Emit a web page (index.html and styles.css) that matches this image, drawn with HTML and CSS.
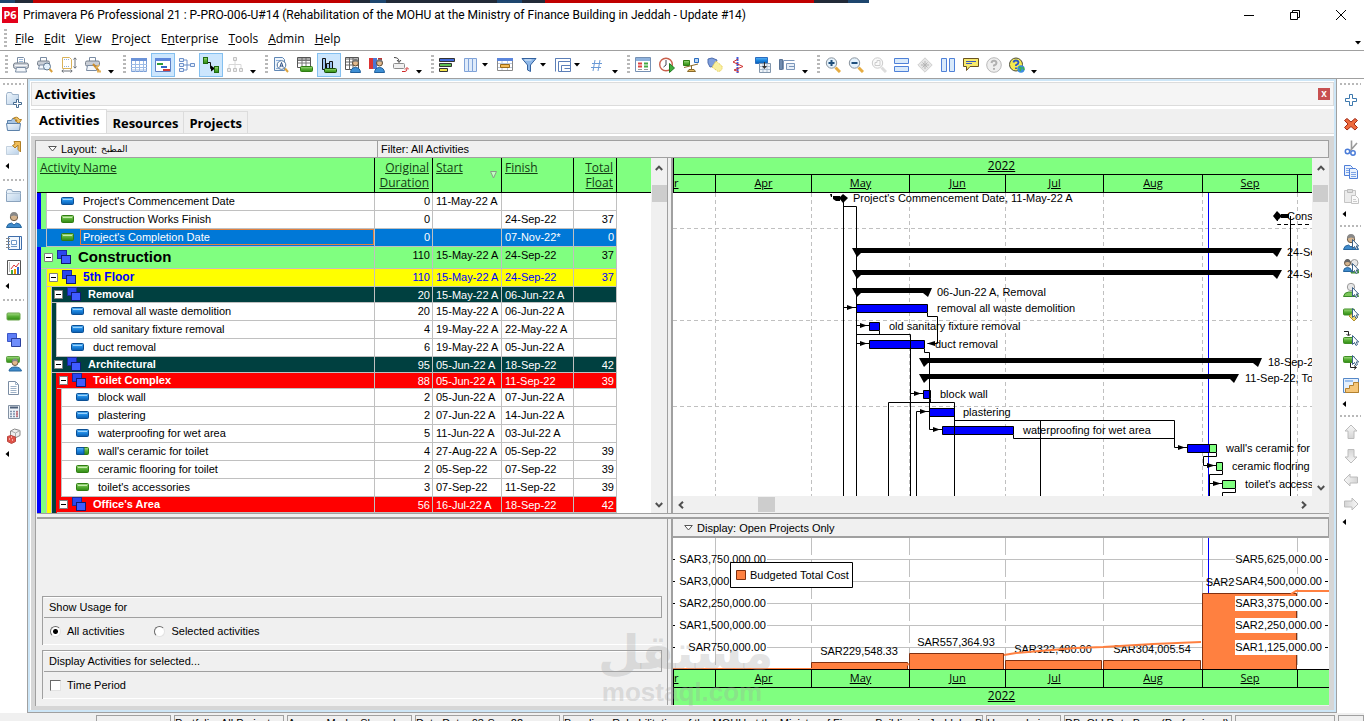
FILE: index.html
```html
<!DOCTYPE html>
<html lang="en">
<head>
    <meta charset="UTF-8">
    <meta name="viewport" content="width=device-width, initial-scale=1.0">
    <title>Primavera P6 Professional 21</title>
    <link rel="stylesheet" href="styles.css">
</head>
<body>
    <!-- Icon sprite -->
    <svg class="sprite" aria-hidden="true">
        <defs>
            <linearGradient id="gBlue" x1="0" y1="0" x2="0" y2="1"><stop offset="0" stop-color="#5db4f5"/><stop offset=".5" stop-color="#1b86e0"/><stop offset="1" stop-color="#0a5cae"/></linearGradient>
            <linearGradient id="gGreen" x1="0" y1="0" x2="0" y2="1"><stop offset="0" stop-color="#a5dc84"/><stop offset=".5" stop-color="#57ae35"/><stop offset="1" stop-color="#2f8a12"/></linearGradient>
            <linearGradient id="gPale" x1="0" y1="0" x2="1" y2="1"><stop offset="0" stop-color="#f2f8fd"/><stop offset="1" stop-color="#b8d0e8"/></linearGradient>
            <linearGradient id="gGrey" x1="0" y1="0" x2="0" y2="1"><stop offset="0" stop-color="#f8f8f8"/><stop offset="1" stop-color="#d4d4d4"/></linearGradient>
        </defs>
        <symbol id="act-blue" viewBox="0 0 13 8"><rect x=".5" y=".5" width="12" height="7" rx="1" fill="url(#gBlue)" stroke="#0b4f94"/><path d="M2 2.5h9" stroke="#9bd2fb"/></symbol>
        <symbol id="act-green" viewBox="0 0 13 8"><rect x=".5" y=".5" width="12" height="7" rx="1" fill="url(#gGreen)" stroke="#2f7d12"/><path d="M2 2.5h9" stroke="#c4ecab"/></symbol>
        <symbol id="act-mix" viewBox="0 0 13 8"><rect x=".5" y=".5" width="12" height="7" rx="1" fill="url(#gGreen)" stroke="#2f7d12"/><path d="M1 .5h7v7H1q-.5 0-.5-.5V1q0-.5.5-.5z" fill="url(#gBlue)" stroke="#0b4f94"/></symbol>
        <symbol id="wbs" viewBox="0 0 14 14"><rect x=".5" y=".5" width="9" height="8" fill="#2b46ee" stroke="#1a2a9c"/><rect x="4.500" y="5.500" width="9" height="8" fill="#3f5cff" stroke="#101a70"/></symbol>
        <symbol id="minus" viewBox="0 0 9 9"><path fill="#fff" stroke="#808080" d="M.5.5h8v8h-8z"/><path d="M2 4.500h5" stroke="#000"/></symbol>
        <symbol id="caret" viewBox="0 0 6 4"><path d="M0 0h6L3 3.500z"/></symbol>
        <symbol id="caret-left" viewBox="0 0 4 6"><path d="M4 0v6L.5 3z"/></symbol>
        <symbol id="tri" viewBox="0 0 9 6"><path d="M.7.500h7.600L4.500 5z" fill="#fff" stroke="#555"/></symbol>
        <symbol id="chev" viewBox="0 0 8 6"><path d="M.8 5L4 1.600 7.200 5" fill="none" stroke="#505050" stroke-width="2"/></symbol>

        <symbol id="print" viewBox="0 0 16 16"><path d="M4.500 6V.500h6l1 1V6" fill="#fff" stroke="#7a8ca3"/><path d="M6 2.500h4M6 4.500h4" stroke="#9db9da"/><rect x=".5" y="6" width="15" height="5.500" rx="2" fill="#c9ced6" stroke="#77808c"/><path d="M2 8.500h12" stroke="#f3f5f8"/><path d="M3.500 10.500h9l1 4.500h-11z" fill="#f4f7fb" stroke="#7a8ca3"/></symbol>
        <symbol id="preview" viewBox="0 0 16 16"><path d="M3.500 4V.500h6V4" fill="#fff" stroke="#7a8ca3"/><rect x=".5" y="4" width="12" height="4.500" rx="1.500" fill="#c9ced6" stroke="#77808c"/><path d="M2.500 8h8v4h-9z" fill="#f4f7fb" stroke="#7a8ca3"/><circle cx="10" cy="9.500" r="3.500" fill="#e4f1fc" stroke="#5f7790"/><path d="M12.500 12l2.700 3" stroke="#d9a03c" stroke-width="2"/></symbol>
        <symbol id="pagesetup" viewBox="0 0 16 16"><path d="M1.500.500h7l2 2v9h-9z" fill="#fff" stroke="#d9b25a"/><path d="M3 2.500h5M3 9.500h6" stroke="#8fb0dc" stroke-dasharray="1 1"/><path d="M14 1v10M12.500 2.500L14 .800l1.500 1.700M12.500 9.500L14 11.200l1.500-1.700M1 14h10M2.500 12.600L.8 14l1.700 1.500M9.500 12.600l1.700 1.400-1.700 1.500" fill="none" stroke="#6b7178"/></symbol>
        <symbol id="printset" viewBox="0 0 16 16"><path d="M4.500 4V.500h6V4" fill="#fff" stroke="#7a8ca3"/><rect x=".5" y="4" width="14" height="5" rx="1.500" fill="#c9ced6" stroke="#77808c"/><path d="M2.500 8.500h9v5h-10z" fill="#f4f7fb" stroke="#7a8ca3"/><path d="M8 7l6 7" stroke="#c98a2a" stroke-width="2"/><path d="M14 8l-3 3M12 14.500h4" stroke="#e2b25c" stroke-width="2"/></symbol>

        <symbol id="tablei" viewBox="0 0 16 16"><path fill="#fff" stroke="#7a9fd6" d="M.5 1.500h15v13H.5z"/><path fill="#6c93d8" d="M0 1h16v3H0z"/><path d="M0 7.500h16M0 10.500h16M0 13h16M4.500 4v11M8.500 4v11M12.500 4v11" stroke="#9dbbe6"/></symbol>
        <symbol id="gantt" viewBox="0 0 16 16"><path fill="#fff" stroke="#5c7fc4" d="M.5 1.500h15v13H.5z"/><path fill="#5c86dc" d="M0 1h16v3H0z"/><path fill="#2e9c3a" d="M2 6h6v2H2z"/><path fill="#2f66c8" d="M6 9h6v2H6z"/><path fill="#cf3a36" d="M8 12h7v2H8z"/></symbol>
        <symbol id="network" viewBox="0 0 16 16"><path fill="#e9f1fc" stroke="#6d90c8" d="M.5 1.500h4v3h-4zM.5 6.500h4v3h-4zM.5 11.500h4v3h-4zM11.500 6.500h4v3h-4z"/><path d="M5 3h3v10H5M5 8h6" fill="none" stroke="#6d90c8"/></symbol>
        <symbol id="trace" viewBox="0 0 16 16"><rect x=".5" y=".5" width="4" height="6" fill="url(#gGreen)" stroke="#1f6b10"/><path d="M5 5.500h2.500v6H9" fill="none" stroke="#111"/><path d="M8 8.500l4 3-4 3z"/><rect x="11.500" y="9.500" width="4" height="6" fill="url(#gGreen)" stroke="#1f6b10"/></symbol>
        <symbol id="orgchart" viewBox="0 0 16 16"><path fill="#eee" stroke="#c2c2c2" d="M6.500.500h3v3h-3zM.5 11.500h3v3h-3zM6.500 11.500h3v3h-3zM12.500 11.500h3v3h-3z"/><path d="M8 4v7M2 11V7.500h12V11" fill="none" stroke="#d8d8d8"/></symbol>

        <symbol id="findtext" viewBox="0 0 16 16"><path d="M1.500.500h8l2 2v11h-10z" fill="#eef5fc" stroke="#5f87b5"/><path d="M3 3.500h5M3 11.500h4" stroke="#8fb0dc"/><circle cx="8.500" cy="8" r="4.300" fill="#fff" stroke="#50759e"/><path d="M6.700 10.500L8.500 5.500l1.800 5M7.300 9h2.400" stroke="#2b4f84" fill="none"/><path d="M12 11.500l3 3.500" stroke="#dda43e" stroke-width="2"/></symbol>
        <symbol id="tablegreen" viewBox="0 0 16 16"><path fill="#fff" stroke="#555" d="M.5.500h13v10H.5z"/><path d="M1 3.500h12M1 6h12M5 1v9M9 1v9" stroke="#777"/><path d="M1 2h12" stroke="#555"/><rect x="3.500" y="9.500" width="12" height="5" rx="1" fill="url(#gGreen)" stroke="#2f7d12"/></symbol>
        <symbol id="chartgreen" viewBox="0 0 16 16"><path fill="#9cc2ef" stroke="#111" d="M1.500 1.500h3v11h-3zM5.500 6.500h3v6h-3zM8.500 4.500h3v8h-3z"/><rect x="3.500" y="11.500" width="12" height="4" rx="1" fill="url(#gGreen)" stroke="#174f08"/></symbol>
        <symbol id="tableuser" viewBox="0 0 16 16"><path fill="#fff" stroke="#555" d="M.5.500h13v12H.5z"/><path d="M1 2h12M1 5h12M1 8h12M4.500 1v12M8 1v12" stroke="#666"/><circle cx="10.500" cy="6" r="3" fill="#e3b98c" stroke="#5a4630"/><path d="M7.500 5.500q0-3.500 3-3.500t3 3.500q-3-2-6 0z" fill="#777"/><path d="M5.500 15.500q.5-5 5-5t5 5z" fill="#3e8fd4" stroke="#1f5f9c"/></symbol>
        <symbol id="chartuser" viewBox="0 0 16 16"><path fill="#d33" d="M0 1h4v11H0z"/><path fill="#4c76d4" d="M4 1h4v11H4z"/><path fill="#b33" d="M9 1h4v6H9z"/><circle cx="10.500" cy="6" r="3" fill="#e3b98c" stroke="#5a4630"/><path d="M7.500 5.500q0-3.500 3-3.500t3 3.500q-3-2-6 0z" fill="#777"/><path d="M5.500 15.500q.5-5 5-5t5 5z" fill="#3e8fd4" stroke="#1f5f9c"/></symbol>
        <symbol id="assignto" viewBox="0 0 16 16"><path d="M1 .500q5 0 5 4M4 3l2 2.500L8 3" fill="none" stroke="#444"/><rect x=".5" y="6.500" width="11" height="5" rx="1" fill="#f0f0f0" stroke="#8c8c8c"/><path d="M9 14.500h3q2 0 2-3M12 12.500l2-2 2 2" fill="none" stroke="#d02a2a"/></symbol>

        <symbol id="bars" viewBox="0 0 16 16"><path fill="#4169d8" stroke="#333" d="M.5 1.500h15v3H.5z"/><path fill="#5fbf52" stroke="#333" d="M.5 6.500h12v3H.5z"/><path fill="#f2e24a" stroke="#333" d="M.5 11.500h8v3h-8z"/></symbol>
        <symbol id="columns" viewBox="0 0 16 16"><path fill="#dfebfa" stroke="#7fa2d8" d="M1.500 1.500h4v13h-4zM5.500 1.500h4v13h-4zM9.500 1.500h4v13h-4z"/></symbol>
        <symbol id="timescale" viewBox="0 0 16 16"><path fill="#fff" stroke="#888" d="M.5 1.500h15v12H.5z"/><path fill="#5c86dc" d="M0 1h16v3H0z"/><path d="M1 6.500h14M1 10.500h14M5 4v9M10.500 4v9" stroke="#b9c6da"/><path fill="#f4bb55" stroke="#9a6a18" d="M3.500 7.500h9v3h-9z"/></symbol>
        <symbol id="filter" viewBox="0 0 16 16"><path d="M1 1.500h14L9.500 8v6.500L6.500 13V8z" fill="#8db7e8" stroke="#33619e"/><path d="M3.500 3h7" stroke="#e4f1fd"/></symbol>
        <symbol id="group" viewBox="0 0 16 16"><path fill="#fff" stroke="#5c7fb8" d="M.5 1.500h15M.5 1.500v13M3.500 4.500h12v10h-12zM6.500 8.500h9M6.500 8.500v6M9.500 11.500h6"/><path d="M.5 1.500h15v3" fill="none" stroke="#5c7fb8"/></symbol>
        <symbol id="hash" viewBox="0 0 16 16"><path d="M6 3L4 14M11 3L9 14M3 6.500h10M2 10.500h10" stroke="#6a9ad6" fill="none"/></symbol>

        <symbol id="spreadsheet" viewBox="0 0 16 16"><path fill="#fff" stroke="#7590b4" d="M.5.500h15v14H.5z"/><path fill="#8fb2dd" d="M1 1h14v3H1z"/><path d="M3 6.500h4M3 9.500h4" stroke="#d44" stroke-width="2"/><path d="M9 6.500h4M9 9.500h4" stroke="#4a4" stroke-width="2"/><path d="M3 12.500h4M9 12.500h4" stroke="#999"/></symbol>
        <symbol id="schedule" viewBox="0 0 16 16"><circle cx="7" cy="7.500" r="6.300" fill="#fff" stroke="#c9604c" stroke-width="1.400"/><path d="M7 3v5l-2.500 2" fill="none" stroke="#445"/><path d="M10.500 6.500v9l5-4.500z" fill="#3fae3f" stroke="#1f7a1f"/></symbol>
        <symbol id="level" viewBox="0 0 16 16"><path fill="url(#gGreen)" stroke="#2f7d12" d="M.5 3.500h6v5h-6z"/><path fill="#bcd8f5" stroke="#2a6cc0" d="M11.500 1.500h4v4h-4z"/><path d="M1 10.500L15 7M8.500 8.500v5" stroke="#8a6a2a"/><path d="M4.500 14.500L6 12.500h5l1.500 2z" fill="#e5b95e" stroke="#8a6a2a"/></symbol>
        <symbol id="spotlight" viewBox="0 0 16 16"><path d="M1 2l4-1 5 2-2 6-5 1-2-4z" fill="#7f9fdc" stroke="#4c6cae"/><path d="M9 4l6 5q1 5-4 5.500L5 10z" fill="#f9f0a0" stroke="#e2c33c" stroke-dasharray="1 1"/></symbol>
        <symbol id="progress" viewBox="0 0 16 16"><path d="M6.500 0v16" stroke="#3f5de0" stroke-width="2" stroke-dasharray="4 1"/><path d="M7 2L2 5l10 4.500L3 13l5 2" fill="none" stroke="#d03030"/></symbol>
        <symbol id="storeperiod" viewBox="0 0 16 16"><path fill="url(#gBlue)" stroke="#2a6cc0" d="M.5.500h12v6H.5z"/><path fill="#eef3f8" stroke="#8296ac" d="M4.500 6.500h11v9h-11z"/><path d="M5 9.500h10M5 12.500h10M8 7v8M12 7v8" stroke="#a9bccf"/><path d="M9 5v4H7l2.500 3L12 9h-2V5z" fill="#333"/></symbol>
        <symbol id="attach" viewBox="0 0 16 16"><path d="M.5 2.500h3v10h-3z" fill="#708cb0" stroke="#5a7496"/><path d="M4.500 3.500h11M4.500 3.500v9M7.500 6.500h8v6h-8zM10 9.500h5" fill="#e8eff8" stroke="#7c97ba"/></symbol>

        <symbol id="zoomin" viewBox="0 0 16 16"><path d="M10.500 10.500l4.500 4.500" stroke="#e6ac42" stroke-width="3"/><circle cx="6.500" cy="6" r="5.200" fill="#e5f2fc" stroke="#8a949e"/><path d="M3.500 6h6M6.500 3v6" stroke="#1f4f7c" stroke-width="2"/></symbol>
        <symbol id="zoomout" viewBox="0 0 16 16"><path d="M10.500 10.500l4.500 4.500" stroke="#e6ac42" stroke-width="3"/><circle cx="6.500" cy="6" r="5.200" fill="#e5f2fc" stroke="#8a949e"/><path d="M3.500 6h6" stroke="#1f4f7c" stroke-width="2"/></symbol>
        <symbol id="zoomfit" viewBox="0 0 16 16"><path d="M10.500 10.500l4.500 4.500" stroke="#ddd" stroke-width="3"/><circle cx="6.500" cy="6" r="5.200" fill="#fafafa" stroke="#ccc"/><path d="M4 8.500v-3h2v-2h3v5z" fill="none" stroke="#ccc"/></symbol>
        <symbol id="splith" viewBox="0 0 16 16"><path fill="#d9eafb" stroke="#4f81d8" d="M.5 1.500h14v5H.5zM.5 9.500h14v5H.5z"/></symbol>
        <symbol id="diamond" viewBox="0 0 16 16"><path d="M8 .800L15.200 8 8 15.200.8 8z" fill="#e6e6e6" stroke="#cfcfcf"/><path d="M8 4v8M4 8h8M5.500 5.500l5 5M10.500 5.500l-5 5" stroke="#b4b4b4"/></symbol>
        <symbol id="splitv" viewBox="0 0 16 16"><path fill="#d9eafb" stroke="#4f81d8" d="M1.500 1.500h5v13h-5zM9.500 1.500h5v13h-5z"/></symbol>
        <symbol id="comment" viewBox="0 0 16 16"><path d="M.5 1.500h15v8H7L3.500 13.500v-4h-3z" fill="#f7ea6c" stroke="#6b5320"/><path d="M3 4.500h10M3 6.500h6" stroke="#3558c4"/></symbol>
        <symbol id="helpgrey" viewBox="0 0 16 16"><circle cx="8" cy="8" r="7.300" fill="#eee" stroke="#b9b9b9"/><path d="M5.500 6q.3-2.300 2.500-2.300T10.500 6Q10.500 7.500 8 8.500v1M8 11v1.800" fill="none" stroke="#b0b0b0" stroke-width="2"/></symbol>
        <symbol id="helpweb" viewBox="0 0 16 16"><circle cx="7" cy="7.500" r="6.500" fill="#f5e94e" stroke="#4a4a3a"/><path d="M4.500 5.500q.3-2 2.500-2t2.500 2Q9.500 7 7 8v1M7 10.500V12" fill="none" stroke="#2b57c8" stroke-width="1.800"/><circle cx="12" cy="12" r="3.700" fill="#3a8de0"/><path d="M10 10l2 1-1 3M14 10l1 3" stroke="#3cb54a" stroke-width="1.600" fill="none"/></symbol>

        <symbol id="folder" viewBox="0 0 16 16"><path d="M.5 3.500l1-2h4l1 2h8v10H.5z" fill="url(#gPale)" stroke="#8ba3bd"/><path d="M.5 5.500h14" stroke="#b9cbdd"/></symbol>
        <symbol id="folderadd" viewBox="0 0 16 16"><path d="M.5 2.500l1-2h4l1 2h6v10H.5z" fill="url(#gPale)" stroke="#9db2c9"/><path d="M10.500 7.500h2v3h3v2h-3v3h-2v-3h-3v-2h3z" fill="#fff" stroke="#456b91"/></symbol>
        <symbol id="folderopen" viewBox="0 0 16 16"><path d="M1.500 4.500h4l1-2h5v5h-10z" fill="#a9c6e4" stroke="#5d82aa"/><path d="M7 2.500q4-3 6.500 1h2l-2.500 4L9 4.500h2q-1-2-4-2z" fill="#f3c566" stroke="#b07f25"/><path d="M.5 7.500h14l-1 7h-12z" fill="url(#gPale)" stroke="#5d82aa"/></symbol>
        <symbol id="folderout" viewBox="0 0 16 16"><path d="M.5 6.500h12v8H.5z" fill="url(#gPale)" stroke="#c3d1df"/><path d="M8 1.500h6.500V12L12 9.500V5L9 8 6.500 5.500 9 4z" fill="#f0bd58" stroke="#b07f25"/></symbol>
        <symbol id="user" viewBox="0 0 16 16"><circle cx="8" cy="5" r="3.700" fill="#d5b48e" stroke="#6b5a45"/><path d="M4 5q0-5 4-5t4 5q-4-3-8 0z" fill="#888"/><path d="M.5 15.500q.5-4 5-4.500l2.500 2 2.500-2q4.500.500 5 4.500z" fill="#3f8bcc" stroke="#25649c"/></symbol>
        <symbol id="notebook" viewBox="0 0 16 16"><path d="M2.500.500h13v13h-13z" fill="#f2f7fd" stroke="#3f6eab"/><path d="M13.500 1v12" stroke="#3f6eab"/><path d="M5.500 4.500h5v4h-5z" fill="#fff" stroke="#6d97c8"/><path d="M0 2.500h4M0 5.500h4M0 8.500h4M0 11.500h4" stroke="#888"/><path d="M5 10.500h6" stroke="#6d97c8"/></symbol>
        <symbol id="report" viewBox="0 0 16 16"><path fill="#fff" stroke="#555" d="M1.500.500h13v14h-13z"/><path d="M3 3h1M3 5h1M3 7h1M3 9h1M3 11h1" stroke="#777"/><path d="M5 9l3-4 2 2 3-4" stroke="#d33" fill="none"/><path fill="#4a4" d="M5 10h2v4H5z"/><path fill="#e90" d="M8 9h2v5H8z"/><path fill="#36c" d="M11 7h2v7h-2z"/></symbol>
        <symbol id="wbs16" viewBox="0 0 16 16"><path fill="#5d7df5" stroke="#3c56c8" d="M1.500 1.500h9v8h-9z"/><path fill="#6f8dfb" stroke="#2b409e" d="M5.500 6.500h9v8h-9z"/></symbol>
        <symbol id="act16" viewBox="0 0 16 16"><rect x="1" y="5" width="13" height="7" rx="1" fill="url(#gGreen)" stroke="#6aa64d"/></symbol>
        <symbol id="usertask" viewBox="0 0 16 16"><rect x=".5" y=".5" width="13" height="6" rx="1" fill="url(#gGreen)" stroke="#5b9d42"/><circle cx="9" cy="6.500" r="3" fill="#e3b98c" stroke="#6b5a45"/><path d="M6 6q0-3.500 3-3.500T12 6q-3-2-6 0z" fill="#888"/><path d="M3 15q.5-4 6-4t6.500 4z" fill="#3f8bcc" stroke="#25649c"/></symbol>
        <symbol id="doc" viewBox="0 0 16 16"><path d="M2.500 1.500h7l3 3v10h-10z" fill="#fff" stroke="#7a8ca3"/><path d="M9.500 1.500v3h3M4.500 6.500h6M4.500 8.500h6M4.500 10.500h6M4.500 12.500h6" stroke="#9fb2c8" fill="none"/></symbol>
        <symbol id="calc" viewBox="0 0 16 16"><path d="M2.500 1.500h11v13h-11z" fill="#eef3f9" stroke="#8291a3"/><path d="M4 3.500h8" stroke="#4d5f78" stroke-width="2"/><path d="M4 7.500h8M4 10h8M4 12.500h8" stroke="#7f93ad" stroke-dasharray="2 1" stroke-width="1.600"/><path d="M11 7v6" stroke="#e05050"/></symbol>
        <symbol id="dice" viewBox="0 0 16 16"><path d="M4.500 3l4-2L14 2.500v5L9 10 4.500 7.500z" fill="#eee" stroke="#888"/><path d="M5 3l4.500 2L14 2.500M9.500 5v5" stroke="#aaa" fill="none"/><path d="M1.500 8.500L5 7.500l4.500 1.500v4.500l-4 2-4-2z" fill="#e05248" stroke="#b8463f"/><path d="M3 11h1M6 12h1M5 9h1" stroke="#fff"/></symbol>

        <symbol id="plus" viewBox="0 0 16 16"><path d="M6.500 2.500h3v4h4v3h-4v4h-3v-4h-4v-3h4z" fill="#fff" stroke="#3d78ad"/></symbol>
        <symbol id="delete" viewBox="0 0 16 16"><path d="M4 2.500l4 3.500 4-3.500 2.500 2L11 8l3.500 3.500-2.500 2.500-4-3.500L4 14l-2.500-2.500L5 8 1.500 4.500z" fill="#ee6a3c" stroke="#a32a16"/></symbol>
        <symbol id="cut" viewBox="0 0 16 16"><path d="M8.500.500v9M14 3L7 11" stroke="#9a9a9a" stroke-width="1.600"/><circle cx="4.500" cy="11.500" r="2.200" fill="none" stroke="#4a7cd8" stroke-width="1.500"/><circle cx="10" cy="13" r="2.200" fill="none" stroke="#4a7cd8" stroke-width="1.500"/></symbol>
        <symbol id="copy" viewBox="0 0 16 16"><path d="M1.500 1.500h6l2 2v8h-8z" fill="#eaf2fd" stroke="#4f7fd8"/><path d="M6.500 4.500h6l2 2v8h-8z" fill="#eaf2fd" stroke="#4f7fd8"/><path d="M8 8.500h5M8 10.500h5M8 12.500h5M3 4.500h3M3 6.500h3M3 8.500h3" stroke="#7fa5e6"/></symbol>
        <symbol id="paste" viewBox="0 0 16 16"><path d="M1.500 2.500h11v12h-11z" fill="#ececec" stroke="#c4c4c4"/><path d="M4.500 1.500h5v3h-5z" fill="#ddd" stroke="#bbb"/><path d="M8.500 7.500h4l3 3v5h-7z" fill="#fafafa" stroke="#c4c4c4"/><path d="M10 11.500h3M10 13.500h4" stroke="#ccc"/></symbol>
        <symbol id="cursor" viewBox="0 0 16 16"><path d="M9.500 5.500v9l2-2 1.500 3 1.500-1-1.300-2.500h2.500z" fill="#fff" stroke="#3d6288"/></symbol>
        <symbol id="usersel" viewBox="0 0 16 16"><use href="#user"/><use href="#cursor"/></symbol>
        <symbol id="usersel2" viewBox="0 0 16 16"><circle cx="11.500" cy="5" r="3.500" fill="#e8e8e8" stroke="#999"/><path d="M8 15q0-4 4-4t3.500 4z" fill="#6fbf4f" stroke="#3a8a28"/><circle cx="4.500" cy="5" r="3" fill="#d5b48e" stroke="#6b5a45"/><path d="M1.500 5q0-4 3-4t3 4q-3-2-6 0z" fill="#666"/><path d="M.5 13.500q0-4 4-4t4 4z" fill="#3f8bcc" stroke="#25649c"/><use href="#cursor"/></symbol>
        <symbol id="rolesel" viewBox="0 0 16 16"><circle cx="8" cy="5" r="3.700" fill="#e6e6e6" stroke="#9a9a9a"/><path d="M.5 14.500q.5-4 5-4.500h5q4.500.500 5 4.500z" fill="#7cc65a" stroke="#3a8a28"/><use href="#cursor"/></symbol>
        <symbol id="actcode" viewBox="0 0 16 16"><rect x=".5" y="3" width="11" height="6" rx="1" fill="url(#gGreen)" stroke="#3f8f25"/><path d="M6 10l4-3 5 4-4 4z" fill="#f3d86a" stroke="#b0902e"/><use href="#cursor" y="-3"/></symbol>
        <symbol id="pred" viewBox="0 0 16 16"><path d="M1 1.500h4.500V5M3.500 4l2 2 2-2" fill="none" stroke="#222"/><rect x=".5" y="7.500" width="11" height="6" rx="1" fill="url(#gGreen)" stroke="#3f8f25"/><use href="#cursor"/></symbol>
        <symbol id="succ" viewBox="0 0 16 16"><rect x=".5" y="2.500" width="11" height="6" rx="1" fill="url(#gGreen)" stroke="#3f8f25"/><path d="M7.500 9v4.500H13M11 11.500l2.500 2-2.500 2" fill="none" stroke="#222"/><use href="#cursor" y="-4"/></symbol>
        <symbol id="steps" viewBox="0 0 16 16"><path d="M.5.500h15v14H.5z" fill="#e6f0fc" stroke="#5588c8"/><path d="M2 3h8" stroke="#9bc0ee" stroke-width="2"/><path d="M2.500 14.500v-4h4v-3h4v-3h5v10z" fill="#f5c678" stroke="#b3812f"/></symbol>
        <symbol id="arrow" viewBox="0 0 16 16"><path d="M8 1l6 6h-3v7.500H5V7H2z" fill="url(#gGrey)" stroke="#bcbcbc"/></symbol>
    </svg>

    <div class="app">
        <div class="behind-window"></div>

        <header class="titlebar">
            <span class="app-icon">P6</span>
            <span class="window-title">Primavera P6 Professional 21 : P-PRO-006-U#14 (Rehabilitation of the MOHU at the Ministry of Finance Building in Jeddah - Update #14)</span>
            <div class="window-buttons">
                <button type="button" aria-label="Minimize"><svg width="10" height="10"><path d="M0 5.500h10" stroke="#000"/></svg></button>
                <button type="button" aria-label="Restore"><svg width="10" height="10"><path d="M.5 2.500h7v7h-7zM2.500 2.500v-2h7v7h-2" fill="none" stroke="#000"/></svg></button>
                <button type="button" aria-label="Close"><svg width="10" height="10"><path d="M0 0l10 10M10 0L0 10" stroke="#000"/></svg></button>
            </div>
        </header>

        <nav class="menubar">
            <span class="grip"></span>
            <a href="#"><u>F</u>ile</a>
            <a href="#"><u>E</u>dit</a>
            <a href="#"><u>V</u>iew</a>
            <a href="#"><u>P</u>roject</a>
            <a href="#">E<u>n</u>terprise</a>
            <a href="#"><u>T</u>ools</a>
            <a href="#"><u>A</u>dmin</a>
            <a href="#"><u>H</u>elp</a>
            <svg class="menu-caret"><use href="#caret"/></svg>
        </nav>

        <div class="toolbar">
            <div class="tool-group">
                <span class="grip"></span>
                <button type="button" aria-label="Print"><svg><use href="#print"/></svg></button>
                <button type="button" aria-label="Print Preview"><svg><use href="#preview"/></svg></button>
                <button type="button" aria-label="Page Setup"><svg><use href="#pagesetup"/></svg></button>
                <button type="button" aria-label="Print Setup"><svg><use href="#printset"/></svg></button>
                <button type="button" class="more" aria-label="More print tools"><svg><use href="#caret"/></svg></button>
            </div>
            <div class="tool-group">
                <span class="grip"></span>
                <button type="button" aria-label="Activity Table"><svg><use href="#tablei"/></svg></button>
                <button type="button" class="on" aria-label="Gantt Chart"><svg><use href="#gantt"/></svg></button>
                <button type="button" aria-label="Activity Network"><svg><use href="#network"/></svg></button>
                <button type="button" class="on" aria-label="Relationship Lines"><svg><use href="#trace"/></svg></button>
                <button type="button" aria-label="Chart View" disabled><svg><use href="#orgchart"/></svg></button>
                <button type="button" class="more" aria-label="More views"><svg><use href="#caret"/></svg></button>
            </div>
            <div class="tool-group">
                <span class="grip"></span>
                <button type="button" aria-label="Activity Details"><svg><use href="#findtext"/></svg></button>
                <button type="button" aria-label="Activity Usage Spreadsheet"><svg><use href="#tablegreen"/></svg></button>
                <button type="button" class="on" aria-label="Activity Usage Profile"><svg><use href="#chartgreen"/></svg></button>
                <button type="button" aria-label="Resource Usage Spreadsheet"><svg><use href="#tableuser"/></svg></button>
                <button type="button" aria-label="Resource Usage Profile"><svg><use href="#chartuser"/></svg></button>
                <button type="button" aria-label="Trace Logic"><svg><use href="#assignto"/></svg></button>
                <button type="button" class="more" aria-label="More bottom layouts"><svg><use href="#caret"/></svg></button>
            </div>
            <div class="tool-group">
                <span class="grip"></span>
                <button type="button" aria-label="Bars"><svg><use href="#bars"/></svg></button>
                <button type="button" class="drop" aria-label="Columns"><svg><use href="#columns"/></svg><svg class="drop-caret"><use href="#caret"/></svg></button>
                <button type="button" aria-label="Timescale"><svg><use href="#timescale"/></svg></button>
                <button type="button" class="drop" aria-label="Filters"><svg><use href="#filter"/></svg><svg class="drop-caret"><use href="#caret"/></svg></button>
                <button type="button" class="drop" aria-label="Group and Sort"><svg><use href="#group"/></svg><svg class="drop-caret"><use href="#caret"/></svg></button>
                <button type="button" aria-label="Line Numbers"><svg><use href="#hash"/></svg></button>
                <button type="button" class="more" aria-label="More layout tools"><svg><use href="#caret"/></svg></button>
            </div>
            <div class="tool-group">
                <span class="grip"></span>
                <button type="button" aria-label="Resource Assignments"><svg><use href="#spreadsheet"/></svg></button>
                <button type="button" aria-label="Schedule"><svg><use href="#schedule"/></svg></button>
                <button type="button" aria-label="Level Resources"><svg><use href="#level"/></svg></button>
                <button type="button" aria-label="Progress Spotlight"><svg><use href="#spotlight"/></svg></button>
                <button type="button" aria-label="Progress Line"><svg><use href="#progress"/></svg></button>
                <button type="button" aria-label="Store Period Performance"><svg><use href="#storeperiod"/></svg></button>
                <button type="button" aria-label="Attachments"><svg><use href="#attach"/></svg></button>
                <button type="button" class="more" aria-label="More tools"><svg><use href="#caret"/></svg></button>
            </div>
            <div class="tool-group tight">
                <span class="grip"></span>
                <button type="button" aria-label="Zoom In"><svg><use href="#zoomin"/></svg></button>
                <button type="button" aria-label="Zoom Out"><svg><use href="#zoomout"/></svg></button>
                <button type="button" aria-label="Zoom to Best Fit" disabled><svg><use href="#zoomfit"/></svg></button>
                <button type="button" aria-label="Split Horizontally"><svg><use href="#splith"/></svg></button>
                <button type="button" aria-label="Center" disabled><svg><use href="#diamond"/></svg></button>
                <button type="button" aria-label="Split Vertically"><svg><use href="#splitv"/></svg></button>
                <button type="button" aria-label="Hint Help"><svg><use href="#comment"/></svg></button>
                <button type="button" aria-label="Help" disabled><svg><use href="#helpgrey"/></svg></button>
                <button type="button" aria-label="Online Help"><svg><use href="#helpweb"/></svg></button>
                <button type="button" class="more" aria-label="More view tools"><svg><use href="#caret"/></svg></button>
            </div>
        </div>

        <div class="workspace">
            <aside class="sidebar">
                <div class="side-group">
                    <span class="grip-h"></span>
                    <button type="button" aria-label="New Project"><svg><use href="#folderadd"/></svg></button>
                    <button type="button" aria-label="Open Project"><svg><use href="#folderopen"/></svg></button>
                    <button type="button" aria-label="Close Project"><svg><use href="#folderout"/></svg></button>
                    <svg class="side-caret"><use href="#caret-left"/></svg>
                </div>
                <div class="side-group">
                    <span class="grip-h"></span>
                    <button type="button" aria-label="Projects"><svg><use href="#folder"/></svg></button>
                    <button type="button" aria-label="Resources"><svg><use href="#user"/></svg></button>
                    <button type="button" aria-label="Notebook"><svg><use href="#notebook"/></svg></button>
                    <button type="button" aria-label="Reports"><svg><use href="#report"/></svg></button>
                    <svg class="side-caret"><use href="#caret-left"/></svg>
                </div>
                <div class="side-group">
                    <span class="grip-h"></span>
                    <button type="button" aria-label="Activities"><svg><use href="#act16"/></svg></button>
                    <button type="button" aria-label="WBS"><svg><use href="#wbs16"/></svg></button>
                    <button type="button" aria-label="Assignments"><svg><use href="#usertask"/></svg></button>
                    <button type="button" aria-label="Documents"><svg><use href="#doc"/></svg></button>
                    <button type="button" aria-label="Expenses"><svg><use href="#calc"/></svg></button>
                    <button type="button" aria-label="Risks"><svg><use href="#dice"/></svg></button>
                    <svg class="side-caret"><use href="#caret-left"/></svg>
                </div>
            </aside>

            <main class="mdi">
                <div class="view-title">
                    <h1>Activities</h1>
                    <button type="button" class="view-close" aria-label="Close view">x</button>
                </div>
                <nav class="tabs">
                    <a href="#" class="tab current">Activities</a>
                    <a href="#" class="tab">Resources</a>
                    <a href="#" class="tab">Projects</a>
                </nav>

                <div class="frame">
                    <div class="layout-bar">
                        <div class="layout-name"><svg class="tri"><use href="#tri"/></svg>Layout: <span class="ar" lang="ar">المطبخ</span></div>
                        <div class="filter-name">Filter: All Activities</div>
                    </div>

                    <div class="top-pane">
                        <div class="grid-side">
                            <table class="activities">
                                <colgroup>
                                    <col class="c-name"><col class="c-dur"><col class="c-start"><col class="c-finish"><col class="c-float"><col class="c-rest">
                                </colgroup>
                                <thead>
                                    <tr>
                                        <th class="left">Activity Name</th>
                                        <th>Original Duration</th>
                                        <th class="left sorted">Start<svg class="sort"><path d="M.5.500h6L3.500 7z" fill="#bfffbf" stroke="#8a9a8a"/></svg></th>
                                        <th class="left">Finish</th>
                                        <th>Total Float</th>
                                        <th></th>
                                    </tr>
                                </thead>
                                <tbody>
                                    <tr class="act l1"><td class="name"><div><svg><use href="#act-blue"/></svg>Project's Commencement Date</div></td><td>0</td><td>11-May-22 A</td><td></td><td></td></tr>
                                    <tr class="act l1"><td class="name"><div><svg><use href="#act-green"/></svg>Construction Works Finish</div></td><td>0</td><td></td><td>24-Sep-22</td><td>37</td></tr>
                                    <tr class="act l1 selected"><td class="name"><div><svg><use href="#act-green"/></svg><span class="editing">Project's Completion Date</span></div></td><td>0</td><td></td><td>07-Nov-22*</td><td>0</td></tr>
                                    <tr class="wbs w1"><td class="name"><div><svg class="box"><use href="#minus"/></svg><svg class="node"><use href="#wbs"/></svg>Construction</div></td><td>110</td><td>15-May-22 A</td><td>24-Sep-22</td><td>37</td></tr>
                                    <tr class="wbs w2"><td class="name"><div><svg class="box"><use href="#minus"/></svg><svg class="node"><use href="#wbs"/></svg>5th Floor</div></td><td>110</td><td>15-May-22 A</td><td>24-Sep-22</td><td>37</td></tr>
                                    <tr class="wbs w3"><td class="name"><div><svg class="box"><use href="#minus"/></svg><svg class="node"><use href="#wbs"/></svg>Removal</div></td><td>20</td><td>15-May-22 A</td><td>06-Jun-22 A</td><td></td></tr>
                                    <tr class="act l3"><td class="name"><div><svg><use href="#act-blue"/></svg>removal all waste demolition</div></td><td>20</td><td>15-May-22 A</td><td>06-Jun-22 A</td><td></td></tr>
                                    <tr class="act l3"><td class="name"><div><svg><use href="#act-blue"/></svg>old sanitary fixture removal</div></td><td>4</td><td>19-May-22 A</td><td>22-May-22 A</td><td></td></tr>
                                    <tr class="act l3"><td class="name"><div><svg><use href="#act-blue"/></svg>duct removal</div></td><td>6</td><td>19-May-22 A</td><td>05-Jun-22 A</td><td></td></tr>
                                    <tr class="wbs w3"><td class="name"><div><svg class="box"><use href="#minus"/></svg><svg class="node"><use href="#wbs"/></svg>Architectural</div></td><td>95</td><td>05-Jun-22 A</td><td>18-Sep-22</td><td>42</td></tr>
                                    <tr class="wbs w4"><td class="name"><div><svg class="box"><use href="#minus"/></svg><svg class="node"><use href="#wbs"/></svg>Toilet Complex</div></td><td>88</td><td>05-Jun-22 A</td><td>11-Sep-22</td><td>39</td></tr>
                                    <tr class="act l4"><td class="name"><div><svg><use href="#act-blue"/></svg>block wall</div></td><td>2</td><td>05-Jun-22 A</td><td>07-Jun-22 A</td><td></td></tr>
                                    <tr class="act l4"><td class="name"><div><svg><use href="#act-blue"/></svg>plastering</div></td><td>2</td><td>07-Jun-22 A</td><td>14-Jun-22 A</td><td></td></tr>
                                    <tr class="act l4"><td class="name"><div><svg><use href="#act-blue"/></svg>waterproofing for wet area</div></td><td>5</td><td>11-Jun-22 A</td><td>03-Jul-22 A</td><td></td></tr>
                                    <tr class="act l4"><td class="name"><div><svg><use href="#act-mix"/></svg>wall's ceramic for toilet</div></td><td>4</td><td>27-Aug-22 A</td><td>05-Sep-22</td><td>39</td></tr>
                                    <tr class="act l4"><td class="name"><div><svg><use href="#act-green"/></svg>ceramic flooring for toilet</div></td><td>2</td><td>05-Sep-22</td><td>07-Sep-22</td><td>39</td></tr>
                                    <tr class="act l4"><td class="name"><div><svg><use href="#act-green"/></svg>toilet's accessories</div></td><td>3</td><td>07-Sep-22</td><td>11-Sep-22</td><td>39</td></tr>
                                    <tr class="wbs w4"><td class="name"><div><svg class="box"><use href="#minus"/></svg><svg class="node"><use href="#wbs"/></svg>Office's Area</div></td><td>56</td><td>16-Jul-22 A</td><td>18-Sep-22</td><td>42</td></tr>
                                </tbody>
                            </table>
                            <div class="vscroll">
                                <svg class="up"><use href="#chev"/></svg>
                                <span class="thumb"></span>
                                <svg class="down"><use href="#chev"/></svg>
                            </div>
                        </div>

                        <div class="gantt-side">
                            <div class="gantt-view">
                                <div class="gantt-chart">
                                    <div class="year"><u>2022</u></div>
                                    <div class="months"><span class="cut"><u>r</u></span><span><u>Apr</u></span><span><u>May</u></span><span><u>Jun</u></span><span><u>Jul</u></span><span><u>Aug</u></span><span><u>Sep</u></span><span></span></div>
                                    <svg class="gantt-body">
                                        <path class="sight" d="M42.500 0v303M138.500 0v303M236.500 0v303M332.500 0v303M430.500 0v303M529.500 0v303M624.500 0v303M0 35.500h660M0 127.500h660M0 213.500h660"/>
                                        <path class="data-date" d="M535.500 0v303"/>

                                        <!-- summary bars -->
                                        <path d="M179 55h430l-5 9-4-4H188l-4 4z"/>
                                        <path d="M179 77h430l-5 9-4-4H188l-4 4z"/>
                                        <path d="M179 95h80l-4 9-5-4H188l-4 4z"/>
                                        <path d="M246 165h343l-4 9-5-4H255l-4 4z"/>
                                        <path d="M246 181h320l-5 9-4-4H255l-4 4z"/>

                                        <!-- activity bars -->
                                        <g class="actual">
                                            <path d="M183.500 111.500h71v8h-71zM196.500 129.500h10v8h-10zM196.500 147.500h55v8h-55zM250.500 197.500h7v8h-7zM256.500 215.500h25v8h-25zM269.500 233.500h71v8h-71zM514.500 251.500h22v8h-22z"/>
                                        </g>
                                        <g class="remaining">
                                            <path d="M536.500 251.500h7v8h-7zM543.500 269.500h6v8h-6zM549.500 287.500h13v8h-13z"/>
                                        </g>

                                        <!-- relationship lines -->
                                        <path class="link" d="M170.500 5v298M170.500 13.500h13V303M170 114.500h13M254.500 120v3.500h10v27h-10M183 132.500h13M206.500 138v3.500M183 141.500h54.500V303M183 150.500h13M251.500 156v3.500h5V236.500h13M237 200.500h13M257.500 206v3.500M215.500 303v-93.500h66V303M243.500 303v-84.500h13M281.500 223v4.500h220V254.500h13M340.500 242v3.500h161M367.500 227v76M543.500 260v3.500h-13v9h13M549.500 278v3.500h-13V303M536 290.500h13M562.500 296v3.500h-13V303M617.500 23v280"/>
                                        <path class="link dashed" d="M604.500 24v7.500h60"/>
                                        <g class="heads">
                                            <path d="M157 1h2v3h-1zM160 3h7v5h-4l-3-2zM608 21h8v4h-8z"/>
                                            <path d="M166 5l4-4 5 4-5 5zM600 23l4-5 5 5-5 5z"/>
                                            <path d="M174 112l7 2.500-7 2.500zM187 130l7 2.500-7 2.500zM187 148l7 2.500-7 2.500zM262 148l-8 2.500 8 2.500zM241 198l7 2.500-7 2.500zM247 216l7 2.500-7 2.500zM260 234l7 2.500-7 2.500zM505 252l7 2.500-7 2.500zM534 270l8 2.500-8 2.500zM540 288l8 2.500-8 2.500z"/>
                                        </g>

                                        <text x="180" y="9">Project's Commencement Date, 11-May-22 A</text>
                                        <text x="614" y="27">Construction Works Finish</text>
                                        <text x="614" y="63">24-Sep-22, Construction</text>
                                        <text x="614" y="85">24-Sep-22, 5th Floor</text>
                                        <text x="264" y="103">06-Jun-22 A, Removal</text>
                                        <text x="264" y="119">removal all waste demolition</text>
                                        <text x="216" y="137">old sanitary fixture removal</text>
                                        <text x="262" y="155">duct removal</text>
                                        <text x="595" y="173">18-Sep-22, Architectural</text>
                                        <text x="572" y="189">11-Sep-22, Toilet Complex</text>
                                        <text x="267" y="205">block wall</text>
                                        <text x="290" y="223">plastering</text>
                                        <text x="350" y="241">waterproofing for wet area</text>
                                        <text x="553" y="259">wall's ceramic for toilet</text>
                                        <text x="559" y="277">ceramic flooring for toilet</text>
                                        <text x="572" y="295">toilet's accessories</text>
                                    </svg>
                                </div>
                                <div class="vscroll wide">
                                    <svg class="up"><use href="#chev"/></svg>
                                    <span class="thumb"></span>
                                    <svg class="down"><use href="#chev"/></svg>
                                </div>
                            </div>
                            <div class="hscroll">
                                <svg class="prev"><use href="#chev"/></svg>
                                <span class="thumb"></span>
                                <svg class="next"><use href="#chev"/></svg>
                            </div>
                        </div>
                    </div>

                    <div class="bottom-pane">
                        <form class="usage-options">
                            <fieldset>
                                <legend class="sr">Show Usage for</legend>
                                <div class="box-title">Show Usage for</div>
                                <div class="box-row">
                                    <label><input type="radio" name="usage" checked>All activities</label>
                                    <label><input type="radio" name="usage">Selected activities</label>
                                </div>
                            </fieldset>
                            <fieldset>
                                <legend class="sr">Display Activities for selected</legend>
                                <div class="box-title">Display Activities for selected...</div>
                                <div class="box-row">
                                    <label><input type="checkbox">Time Period</label>
                                </div>
                            </fieldset>
                        </form>

                        <div class="profile">
                            <div class="profile-bar"><svg class="tri"><use href="#tri"/></svg>Display: Open Projects Only</div>
                            <div class="profile-view">
                                <svg class="histogram">
                                    <path class="vgrid" d="M42.500 0v132M138.500 0v132M236.500 0v132M332.500 0v132M430.500 0v132M529.500 0v132M624.500 0v132"/>
                                    <path class="hgrid" d="M94 21.500h468M94 43.500h468M94 65.500h468M94 87.500h468M94 109.500h468"/>
                                    <path d="M0 21h2v1H0zM0 43h2v1H0zM0 65h2v1H0zM0 87h2v1H0zM0 109h2v1H0z"/>
                                    <path class="data-date" d="M535.500 0v55"/>
                                    <path class="cost" d="M138.500 124.500h96V133h-96zM236.500 115.500h94V133h-94zM332.500 122.500h96V133h-96zM430.500 122.500h97V133h-97zM529.500 55.500h94V133h-94z"/>
                                    <g class="axis">
                                        <text x="93" y="25">SAR3,750,000.00</text>
                                        <text x="93" y="47">SAR3,000,000.00</text>
                                        <text x="93" y="69">SAR2,250,000.00</text>
                                        <text x="93" y="91">SAR1,500,000.00</text>
                                        <text x="93" y="113">SAR750,000.00</text>
                                    </g>
                                    <g class="values">
                                        <text x="186" y="117">SAR229,548.33</text>
                                        <text x="283" y="108">SAR557,364.93</text>
                                        <text x="380" y="115">SAR322,480.00</text>
                                        <text x="479" y="115">SAR304,005.54</text>
                                        <text x="547" y="48">SAR2</text>
                                    </g>
                                    <path class="cumulative" d="M0 131h162M233 127l3-1M331 117l12-2 60-5 27-1 50-3 48-2M618 56l5-3h60"/>
                                    <path fill="#fff" d="M562 14h87v15h-87zM562 36h87v15h-87zM562 58h87v15h-87zM562 80h87v15h-87zM562 102h87v15h-87z"/>
                                    <g class="axis">
                                        <text x="649" y="25">SAR5,625,000.00</text>
                                        <text x="649" y="47">SAR4,500,000.00</text>
                                        <text x="649" y="69">SAR3,375,000.00</text>
                                        <text x="649" y="91">SAR2,250,000.00</text>
                                        <text x="649" y="113">SAR1,125,000.00</text>
                                    </g>
                                    <path d="M652 21h3v1h-3zM652 43h3v1h-3zM652 65h3v1h-3zM652 87h3v1h-3zM652 109h3v1h-3z"/>
                                    <path d="M57.500 24.500h122v25h-122z" fill="#fff" stroke="#000"/>
                                    <path class="cost" d="M63.500 32.500h9v9h-9z"/>
                                    <text x="77" y="41">Budgeted Total Cost</text>
                                </svg>
                                <div class="months"><span class="cut"><u>r</u></span><span><u>Apr</u></span><span><u>May</u></span><span><u>Jun</u></span><span><u>Jul</u></span><span><u>Aug</u></span><span><u>Sep</u></span><span></span></div>
                                <div class="year"><u>2022</u></div>
                            </div>
                        </div>
                    </div>
                </div>
            </main>

            <aside class="sidebar right">
                <div class="side-group">
                    <span class="grip-h"></span>
                    <button type="button" aria-label="Add"><svg><use href="#plus"/></svg></button>
                    <button type="button" aria-label="Delete"><svg><use href="#delete"/></svg></button>
                    <button type="button" aria-label="Cut"><svg><use href="#cut"/></svg></button>
                    <button type="button" aria-label="Copy"><svg><use href="#copy"/></svg></button>
                    <button type="button" aria-label="Paste" disabled><svg><use href="#paste"/></svg></button>
                    <svg class="side-caret"><use href="#caret-left"/></svg>
                </div>
                <div class="side-group">
                    <span class="grip-h"></span>
                    <button type="button" aria-label="Assign Resources"><svg><use href="#usersel"/></svg></button>
                    <button type="button" aria-label="Assign Resources by Role"><svg><use href="#usersel2"/></svg></button>
                    <button type="button" aria-label="Assign Roles"><svg><use href="#rolesel"/></svg></button>
                    <button type="button" aria-label="Assign Activity Codes"><svg><use href="#actcode"/></svg></button>
                    <button type="button" aria-label="Assign Predecessors"><svg><use href="#pred"/></svg></button>
                    <button type="button" aria-label="Assign Successors"><svg><use href="#succ"/></svg></button>
                    <button type="button" aria-label="Steps"><svg><use href="#steps"/></svg></button>
                    <svg class="side-caret"><use href="#caret-left"/></svg>
                </div>
                <div class="side-group">
                    <span class="grip-h"></span>
                    <button type="button" aria-label="Move Up" disabled><svg><use href="#arrow"/></svg></button>
                    <button type="button" aria-label="Move Down" disabled><svg class="r180"><use href="#arrow"/></svg></button>
                    <button type="button" aria-label="Move Left" disabled><svg class="r270"><use href="#arrow"/></svg></button>
                    <button type="button" aria-label="Move Right" disabled><svg class="r90"><use href="#arrow"/></svg></button>
                    <svg class="side-caret"><use href="#caret-left"/></svg>
                </div>
            </aside>
        </div>

        <footer class="statusbar">
            <span class="s-blank"></span>
            <span class="s-portfolio">Portfolio: All Projects</span>
            <span class="s-access">Access Mode: Shared</span>
            <span class="s-date">Data Date: 03-Sep-22</span>
            <span class="s-baseline">Baseline: Rehabilitation of the MOHU at the Ministry of Finance Building in Jeddah - B1</span>
            <span class="s-user">User: admin</span>
            <span class="s-db">DB: Old Data Base (Professional)</span>
            <span class="s-last"></span>
            <span class="s-end"></span>
        </footer>

        <div class="watermark"><span lang="ar">مستقل</span><b>mostaql.com</b></div>
    </div>
</body>
</html>
```
FILE: styles.css
```css
* {
    box-sizing: border-box;
}
body {
    margin: 0;
    overflow: hidden;
    background: #fff;
    color: #000;
    font: 11px/14px "Liberation Sans", Arial, sans-serif;
}
a {
    color: inherit;
    text-decoration: none;
}
button {
    margin: 0;
    padding: 0;
    border: 0;
    background: none;
    font: inherit;
}
svg {
    display: block;
    flex: none;
}
.sprite {
    position: absolute;
    width: 0;
    height: 0;
}
/* the status bar hangs over the bottom edge of the screen */
.app {
    position: relative;
    display: flex;
    flex-direction: column;
    height: calc(100vh + 10px);
}

/* title and menu */
.behind-window {
    flex: none;
    height: 3px;
    background: linear-gradient(90deg, #1e466e 15px, #222a38 15px 33px, #c00000 33px 350px, #222a38 350px 370px, #1e466e 370px 386px, #222a38 386px 497px, #1e466e 497px 522px, #222a38 522px 545px, #c00000 545px 814px, #222a38 814px 848px, #1e466e 848px 869px, #fff 869px);
}
.titlebar {
    display: flex;
    flex: none;
    align-items: center;
    height: 24px;
    padding-left: 2px;
    font: 12px/16px Roboto, "Noto Sans", sans-serif;
}
.app-icon {
    width: 16px;
    margin-right: 5px;
    background: #e3001b;
    color: #fff;
    font: bold 11px/16px "Open Sans", sans-serif;
    text-align: center;
}
.window-title {
    flex: 1;
    white-space: nowrap;
    overflow: hidden;
}
.window-buttons {
    display: flex;
}
.window-buttons button {
    display: flex;
    justify-content: center;
    width: 46px;
}
.menubar {
    display: flex;
    flex: none;
    align-items: center;
    gap: 10px;
    height: 24px;
    padding-left: 4px;
    border-bottom: 1px solid #a0a0a0;
    font: 12px/16px "Open Sans", "Noto Sans", sans-serif;
}
.menubar .grip {
    margin-right: -2px;
}
.menu-caret {
    align-self: flex-end;
    width: 6px;
    height: 4px;
    margin: 0 3px 5px auto;
}
.grip {
    flex: none;
    align-self: center;
    width: 3px;
    height: 20px;
    background: repeating-linear-gradient(#b8b8b8 0 2px, #fff 2px 4px);
}
.toolbar {
    display: flex;
    flex: none;
    height: 28px;
    padding-left: 5px;
    border-bottom: 1px solid #a0a0a0;
}
.tool-group {
    display: flex;
    align-items: center;
    padding-right: 6px;
}
.tool-group .grip {
    margin-right: 1px;
}
.tool-group button {
    display: flex;
    align-items: center;
    width: 24px;
    height: 24px;
    padding-left: 4px;
}
.tool-group svg {
    width: 16px;
    height: 16px;
}
.tool-group.tight button {
    width: 23px;
}
.tool-group .on {
    border: 1px solid #84c0f0;
    background: #cce6fd;
    padding-left: 3px;
}
.tool-group .drop {
    width: 34px;
    gap: 3px;
}
.tool-group .more,
.tool-group.tight .more {
    align-items: flex-end;
    width: 12px;
    padding: 0 0 3px 3px;
}
.tool-group .more svg,
.tool-group .drop-caret {
    width: 6px;
    height: 4px;
}

/* side bars */
.workspace {
    display: flex;
    flex: 1;
    min-height: 0;
}
.sidebar {
    flex: none;
    width: 27px;
    padding-top: 4px;
}
.side-group {
    display: flex;
    flex-direction: column;
    align-items: center;
    padding-bottom: 7px;
}
.sidebar.right .side-group {
    padding-bottom: 5px;
}
.grip-h {
    width: 21px;
    height: 2px;
    margin-bottom: 3px;
    background: repeating-linear-gradient(90deg, #b8b8b8 0 2px, #fff 2px 4px);
}
.side-group button {
    display: flex;
    align-items: center;
    justify-content: center;
    width: 24px;
    height: 24px;
}
.side-group svg {
    width: 16px;
    height: 16px;
}
.side-group .side-caret {
    align-self: flex-start;
    width: 4px;
    height: 6px;
    margin: 3px 0 3px 5px;
}
.r90 {
    transform: rotate(90deg);
}
.r180 {
    transform: rotate(180deg);
}
.r270 {
    transform: rotate(270deg);
}

/* main window */
.mdi {
    display: flex;
    flex: 1;
    flex-direction: column;
    min-width: 0;
    border: solid #a0a0a0;
    border-width: 0 1px 1px;
    padding: 2px;
    background: #fff;
    box-shadow: inset 0 0 0 2px #cde6f7;
}
.view-title {
    display: flex;
    flex: none;
    align-items: center;
    justify-content: space-between;
    height: 24px;
    margin: 1px 0 3px 1px;
    padding: 0 3px;
    border: 1px solid #dcdcdc;
    background: #f5f5f5;
}
h1,
.tab {
    margin: 0;
    font: bold 13px/18px "Open Sans", "Noto Sans", sans-serif;
}
.view-close {
    width: 12px;
    height: 12px;
    background: #c75050;
    color: #fff;
    font: bold 10px/10px "Liberation Sans", sans-serif;
}
.tabs {
    display: flex;
    flex: none;
    align-items: flex-end;
    height: 25px;
    margin: 0 0 2px 1px;
    border-bottom: 1px solid #dcdcdc;
    background: #f0f0f0;
}
.tab {
    height: 22px;
    padding: 2px 5px 0;
    border: solid #dcdcdc;
    border-width: 1px 1px 0 0;
}
.tab.current {
    height: 24px;
    padding: 1px 7px 0 8px;
    background: #fff;
}
.frame {
    display: flex;
    flex: 1;
    flex-direction: column;
    min-height: 0;
    margin: 0 0 0 1px;
    padding: 1px 0 1px 2px;
    border: solid #d6d6d6;
    border-width: 4px 5px 4px 4px;
    background: #f0f0f0;
    box-shadow: inset 1px 1px 0 #a0a0a0;
}
.layout-bar {
    display: flex;
    flex: none;
    height: 17px;
    border-bottom: 1px solid #a0a0a0;
}
.layout-name,
.profile-bar {
    display: flex;
    align-items: center;
    gap: 4px;
}
.layout-name {
    width: 341px;
    padding-left: 11px;
    border-right: 1px solid #a0a0a0;
}
.filter-name {
    flex: 1;
    padding: 1px 3px;
    border-right: 1px solid #a0a0a0;
}
.ar {
    font: 9px/12px "DejaVu Sans", sans-serif;
}
.tri {
    width: 9px;
    height: 6px;
}

.top-pane {
    display: flex;
    flex: none;
    border-bottom: 1px solid #a0a0a0;
}
.grid-side {
    display: flex;
    flex: none;
    width: 631px;
    background: #fff;
    border-right: 1px solid #a0a0a0;
}

/* activity table */
.activities {
    width: 614px;
    table-layout: fixed;
    border-spacing: 0;
}
.c-name {
    width: 338px;
}
.c-dur {
    width: 58px;
}
.c-start {
    width: 69px;
}
.c-finish {
    width: 72px;
}
.c-float {
    width: 43px;
}
.activities th {
    height: 35px;
    padding: 2px 3px 0;
    border-right: 1px solid #000;
    border-bottom: 1px solid #000;
    background: #80ff80;
    color: #143c14;
    font: 12px/15px "Open Sans", "Noto Sans", sans-serif;
    text-align: right;
    text-decoration: underline;
    vertical-align: top;
}
.activities th:last-child {
    border-right: 0;
}
.activities th.left {
    text-align: left;
}
.sort {
    float: right;
    width: 8px;
    height: 8px;
    margin-top: 11px;
}
.activities td {
    height: 18px;
    padding: 1px 2px 0 3px;
    border: solid #c0c0c0;
    border-width: 0 1px 1px 0;
    line-height: 14px;
    white-space: nowrap;
    vertical-align: top;
}
.activities td:nth-child(2),
.activities td:nth-child(5) {
    text-align: right;
}
.activities td.name {
    padding: 0;
    border-bottom: 0;
}
.name div {
    display: flex;
    align-items: center;
    height: 18px;
    padding-bottom: 1px;
    border-bottom: 1px solid #c0c0c0;
}
.act .name div {
    gap: 9px;
    padding-left: 14px;
    border-left: 1px solid #c0c0c0;
}
.act .name svg {
    width: 13px;
    height: 8px;
}
.name .box {
    width: 9px;
    height: 9px;
    margin-right: 4px;
}
.name .node {
    width: 14px;
    height: 14px;
    margin-right: 7px;
}

/* colour bands of the parent levels */
.l1 .name {
    background: linear-gradient(90deg, #0000ff 4px, #80ff80 4px);
}
.l1 .name div {
    margin-left: 9px;
    background: #fff;
}
.l3 .name,
.l4 .name,
.w4 .name {
    background: linear-gradient(90deg, #0000ff 4px, #80ff80 4px 9px, #c0c0c0 9px 10px, #ffff00 10px 14px, #c0c0c0 14px 15px, #004040 15px 19px, #ff0000 19px);
}
.l3 .name div {
    margin-left: 19px;
    background: #fff;
}
.l4 .name div {
    margin-left: 24px;
    background: #fff;
}
.w1 .name {
    background: #0000ff;
}
.w1 .name div {
    height: 22px;
    margin-left: 4px;
    padding-left: 3px;
    font-size: 15px;
    font-weight: bold;
}
.w1 .name div,
.w1 td {
    background: #80ff80;
}
.activities .w1 .name {
    background: linear-gradient(90deg, #0000ff 4px, #80ff80 4px);
}
.w2 .name {
    background: linear-gradient(90deg, #0000ff 4px, #80ff80 4px 9px, #c0c0c0 9px);
}
.w2 .name div {
    margin-left: 10px;
    padding-left: 2px;
    font-size: 12px;
    font-weight: bold;
}
.w2 .name div,
.w2 td {
    background: #ffff00;
    color: #0000ff;
}
.activities .w2 .name {
    background: linear-gradient(90deg, #0000ff 4px, #80ff80 4px 9px, #c0c0c0 9px);
}
.w3 .name div {
    margin-left: 15px;
    padding-left: 2px;
}
.w3 .name div,
.w3 td {
    background: #004040;
    color: #fff;
}
.activities .w3 .name {
    background: linear-gradient(90deg, #0000ff 4px, #80ff80 4px 9px, #c0c0c0 9px 10px, #ffff00 10px 14px, #c0c0c0 14px);
}
.w4 .name div {
    margin-left: 20px;
    padding-left: 2px;
}
.w4 .name div,
.w4 td {
    background: #ff0000;
    color: #fff;
}
.activities .w3 td,
.activities .w4 td {
    height: 16px;
}
.w3 .name div,
.w4 .name div {
    height: 16px;
    font-weight: bold;
}
.selected td,
.selected .name,
.selected .name div {
    background: #0078d7;
    color: #fff;
}
.activities .selected .name div {
    gap: 6px;
}
.editing {
    flex: 1;
    padding-left: 2px;
    border: 1px solid #e08040;
    line-height: 14px;
}

/* scroll bars */
.vscroll,
.hscroll {
    display: flex;
    align-items: center;
    background: #f0f0f0;
}
.vscroll {
    flex: 1;
    flex-direction: column;
    padding: 7px 0 5px;
}
.vscroll.wide {
    flex: none;
    width: 17px;
}
.vscroll svg,
.hscroll svg {
    width: 8px;
    height: 6px;
}
.vscroll .thumb {
    width: 15px;
    height: 17px;
    margin-top: 14px;
    background: #cdcdcd;
}
.vscroll .down {
    margin-top: auto;
    transform: rotate(180deg);
}
.hscroll {
    height: 17px;
    padding: 0 21px 0 4px;
}
.hscroll .thumb {
    width: 17px;
    height: 15px;
    margin-left: 73px;
    background: #cdcdcd;
}
.hscroll .prev {
    transform: rotate(270deg);
}
.hscroll .next {
    margin-left: auto;
    transform: rotate(90deg);
}

/* gantt */
.gantt-side {
    display: flex;
    flex: 1;
    flex-direction: column;
    min-width: 0;
    margin-left: 3px;
    border-left: 2px solid #a0a0a0;
}
.gantt-view {
    display: flex;
    flex: 1;
}
.gantt-chart {
    flex: 1;
    min-width: 0;
    overflow: hidden;
    background: #fff;
}
.year {
    height: 17px;
    border-bottom: 1px solid #000;
    border-left: 1px solid #000;
    background: #80ff80;
    font: 12px/16px "Open Sans", "Noto Sans", sans-serif;
    text-align: center;
}
.gantt-chart .year {
    padding-left: 17px;
}
.months {
    display: grid;
    grid-template-columns: 43px 96px 98px 96px 98px 99px 95px 1fr;
    height: 18px;
    border-bottom: 1px solid #000;
    background: #80ff80;
    font: 11px/16px "Open Sans", "Noto Sans", sans-serif;
    text-align: center;
}
.months span {
    border-right: 1px solid #000;
}
.months span:last-child {
    border-right: 0;
}
.months .cut {
    border-left: 1px solid #000;
    text-align: left;
}
.gantt-body {
    width: 100%;
    height: 303px;
}
.sight {
    fill: none;
    stroke: #c0c0c0;
    stroke-dasharray: 4 3;
}
.data-date {
    stroke: #0000ff;
}
.actual {
    fill: #0000ff;
    stroke: #000;
}
.remaining {
    fill: #80ff80;
    stroke: #000;
}
.link {
    fill: none;
    stroke: #000;
}
.link.dashed {
    stroke-dasharray: 4 3;
}

/* bottom layout */
.bottom-pane {
    display: flex;
    flex: 1;
    min-height: 0;
    margin-top: 3px;
    border-top: 2px solid #a0a0a0;
}
.usage-options {
    display: flex;
    flex: none;
    flex-direction: column;
    justify-content: flex-end;
    gap: 5px;
    width: 631px;
    padding: 0 5px 6px;
    border-right: 1px solid #a0a0a0;
}
fieldset {
    min-width: 0;
    margin: 0;
    padding: 0 0 0 1px;
    border: solid #a0a0a0;
    border-width: 1px 0 0 1px;
    box-shadow: inset 0 -1px #fff;
}
.sr {
    position: absolute;
    width: 1px;
    height: 1px;
    overflow: hidden;
    clip-path: inset(50%);
}
.box-title {
    height: 21px;
    padding: 0 5px;
    border: solid #a0a0a0;
    border-width: 0 1px 1px 0;
    line-height: 20px;
    box-shadow: inset 0 1px #fff;
}
.box-row {
    display: flex;
    gap: 30px;
    padding: 5px 6px 6px;
}
.box-row label {
    display: flex;
    align-items: center;
    gap: 6px;
    height: 16px;
}
input {
    appearance: none;
    width: 11px;
    height: 11px;
    margin: 0;
    border: 1px solid;
    border-color: #696969 #e3e3e3 #e3e3e3 #696969;
    background: #fff;
}
input[type="radio"] {
    border-radius: 50%;
}
input[type="radio"]:checked {
    background: radial-gradient(#000 2px, #fff 3px);
}
.profile {
    display: flex;
    flex: 1;
    flex-direction: column;
    min-width: 0;
    margin-left: 3px;
    border-left: 2px solid #a0a0a0;
}
.profile-bar {
    flex: none;
    height: 19px;
    padding-left: 11px;
    border: solid #a0a0a0;
    border-width: 0 1px 2px 0;
}
.profile-view {
    flex: 1;
    min-height: 0;
    background: #80ff80;
    overflow: hidden;
}
.histogram {
    width: 100%;
    height: 132px;
    border-bottom: 1px solid #000;
    background: #fff;
}
.profile-view .year {
    border-bottom: 0;
}
.vgrid {
    stroke: #c0c0c0;
    stroke-dasharray: 17 5;
}
.hgrid {
    stroke: #c0c0c0;
}
.cost {
    fill: #ff8040;
    stroke: #803010;
}
.cumulative {
    fill: none;
    stroke: #ff8040;
    stroke-width: 2;
}
.axis {
    text-anchor: end;
}
.values {
    text-anchor: middle;
}

/* status bar */
.statusbar {
    display: flex;
    flex: none;
    gap: 3px;
    height: 18px;
    padding: 2px 0 0 96px;
    background: #f0f0f0;
}
.statusbar span {
    flex: none;
    border: solid #a0a0a0;
    border-width: 1px 1px 0 1px;
    white-space: nowrap;
    overflow: hidden;
}
.statusbar .s-blank {
    width: 75px;
}
.statusbar .s-portfolio {
    width: 110px;
}
.statusbar .s-access {
    width: 125px;
}
.statusbar .s-date {
    width: 145px;
}
.statusbar .s-baseline {
    flex: 1;
}
.statusbar .s-user {
    width: 75px;
}
.statusbar .s-db {
    width: 168px;
}
.statusbar .s-last {
    width: 100px;
}
.statusbar .s-end {
    width: 26px;
}

.watermark {
    position: absolute;
    top: 624px;
    left: 598px;
    width: 168px;
    color: rgba(160, 160, 160, 0.3);
    text-align: center;
    pointer-events: none;
}
.watermark span {
    display: block;
    height: 56px;
    font: bold 48px/56px "DejaVu Sans", sans-serif;
}
.watermark b {
    display: block;
    font: bold 26px/24px "Liberation Sans", sans-serif;
}
```
